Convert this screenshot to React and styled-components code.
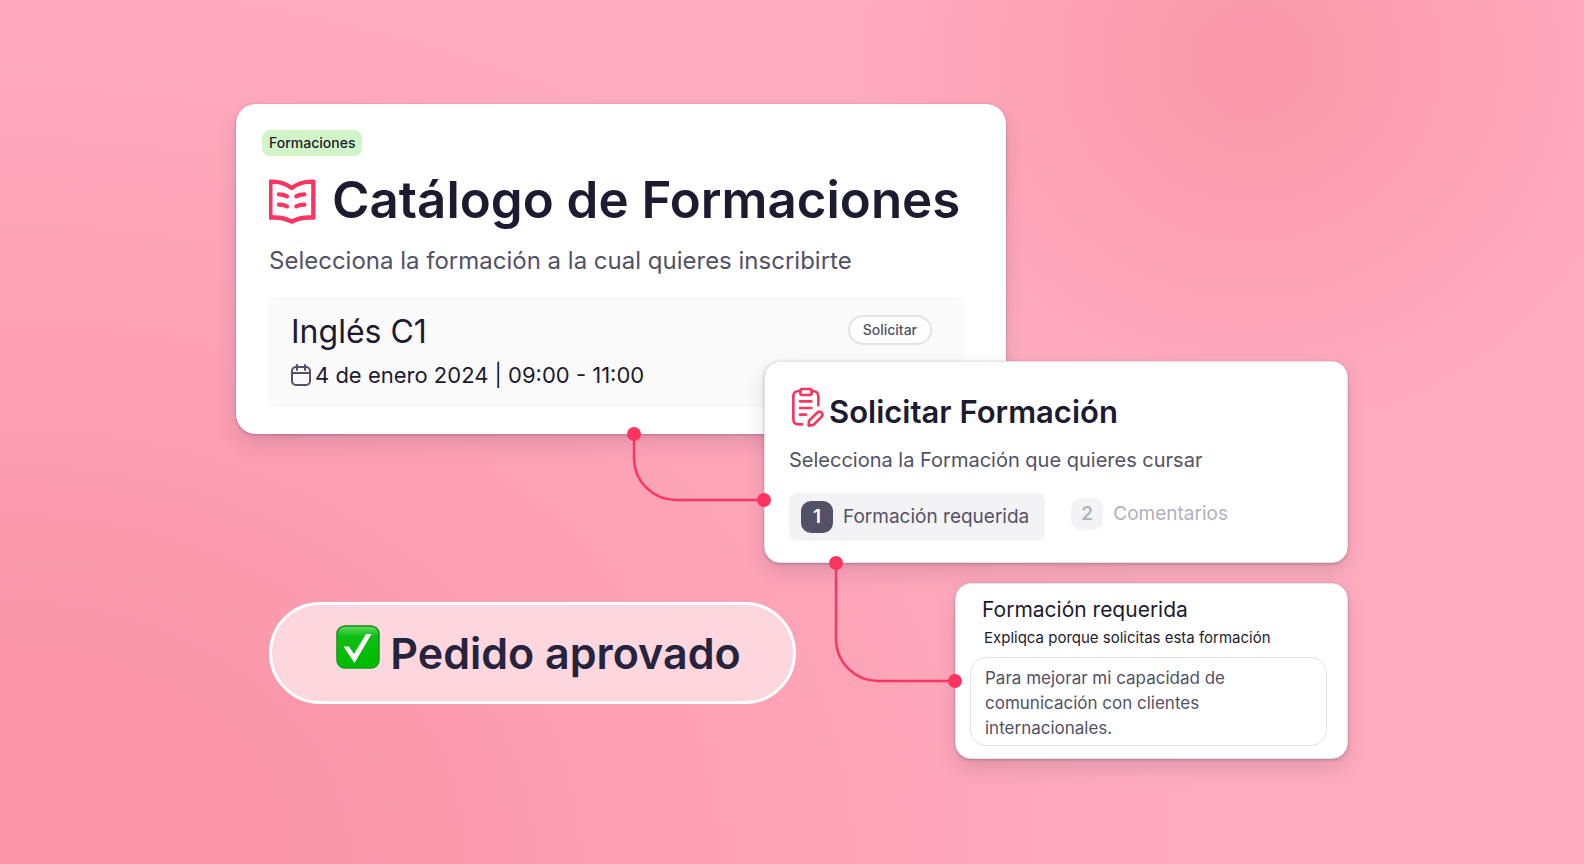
import styled, { createGlobalStyle, css } from 'styled-components';

const GlobalStyle = createGlobalStyle`
  *,
  *::before,
  *::after {
    box-sizing: border-box;
    margin: 0;
    padding: 0;
  }

  :root {
    --color-brand: #fb3560;
    --color-ink: #1d1b30;
    --color-grey-600: #535165;
    --color-grey-400: #b1b1b9;
    --color-grey-200: #e4e4e8;
    --color-grey-100: #f3f3f5;
    --color-grey-50: #fafafa;
    --shadow-card: 0 1px 3px rgba(60, 40, 70, 0.3), 0 10px 20px rgba(60, 40, 70, 0.14);
  }

  body {
    font-family: Inter, 'Liberation Sans', sans-serif;
    color: var(--color-ink);
  }

  button,
  textarea {
    font: inherit;
    color: inherit;
  }
`;

const Page = styled.main`
  min-height: 100vh;
  display: grid;
  place-items: center;
  padding: 24px 24px 26px;
  background:
    radial-gradient(
      ellipse 400px 380px at 79% 7%,
      rgba(250, 148, 168, 0.8),
      rgba(250, 148, 168, 0.6) 35%,
      rgba(250, 148, 168, 0)
    ),
    radial-gradient(ellipse 1200px 900px at 0 100%, #fb95aa 20%, rgba(251, 149, 170, 0) 100%),
    #ffacbf;
`;

const Board = styled.div`
  width: 100%;
  max-width: 1112px;
  display: grid;
  grid-template-columns: 33fr 495fr 32fr 159fr 51fr 342fr;
  grid-template-rows:
    257px 73px minmax(129px, auto) 20px 19px minmax(102px, auto)
    minmax(55px, auto);
`;

const Card = styled.section`
  position: relative;
  background-color: #fff;
  border-radius: 16px;
  box-shadow: var(--shadow-card);
`;

const CatalogCard = styled(Card)`
  grid-column: 1 / 6;
  grid-row: 1 / 3;
  padding: 26px 42px 26px 33px;
  border-radius: 20px;
`;

const RequestCard = styled(Card)`
  grid-column: 3 / 7;
  grid-row: 2 / 4;
  padding: 24px 24px 21px;
  border: 1px solid var(--color-grey-200);
`;

const ReasonCard = styled(Card)`
  grid-column: 5 / 7;
  grid-row: 5 / 8;
  padding: 12px 20px 12px 14px;
  border: 1px solid var(--color-grey-200);
`;

const Badge = styled.span`
  display: block;
  width: fit-content;
  margin-left: -7px;
  padding: 0 7px;
  border-radius: 8px;
  background-color: #d2f5c8;
  font-size: 14px;
  font-weight: 500;
  line-height: 26px;
`;

const Title = styled.h1`
  display: flex;
  align-items: center;
  gap: 16px;
  margin-top: 12px;
  font-size: 51px;
  font-weight: 600;
  line-height: 64px;
  white-space: nowrap;
`;

const Subtitle = styled.p`
  color: var(--color-grey-600);
  font-size: 24px;
  line-height: 32px;
  margin-top: 13px;
`;

const Course = styled.article`
  display: flex;
  justify-content: space-between;
  align-items: flex-start;
  margin-top: 20px;
  padding: 16px 32px 16px 22px;
  border-radius: 8px;
  background-color: var(--color-grey-50);
`;

const CourseName = styled.h2`
  font-size: 32px;
  font-weight: 400;
  line-height: 38px;
`;

const CourseDate = styled.p`
  display: flex;
  align-items: center;
  gap: 4px;
  margin-top: 8px;
  font-size: 22px;
  line-height: 32px;
`;

const ApplyButton = styled.button`
  padding: 0 13px;
  border: 2px solid var(--color-grey-200);
  border-radius: 16px;
  background-color: #fff;
  color: var(--color-grey-600);
  font-size: 14px;
  font-weight: 500;
  line-height: 26px;
  margin-top: 2px;
`;

const RequestTitle = styled.h2`
  display: flex;
  align-items: flex-start;
  gap: 4px;
  font-size: 31px;
  font-weight: 600;
  line-height: 52px;
`;

const RequestText = styled.p`
  margin-top: 6px;
  color: var(--color-grey-600);
  font-size: 20px;
  line-height: 32px;
`;

const Steps = styled.ol`
  display: flex;
  align-items: flex-start;
  gap: 14px;
  margin-top: 17px;
  list-style: none;
`;

const StepButton = styled.button`
  display: flex;
  align-items: center;
  gap: 10px;
  padding: 5px 12px;
  border: 0;
  border-radius: 8px;
  background: none;
  color: var(--color-grey-400);
  font-size: 19px;
  line-height: 32px;

  ${(props) =>
    props.$active &&
    css`
      padding: 8px 16px 8px 12px;
      background-color: var(--color-grey-100);
      color: var(--color-grey-600);
    `}
`;

const StepNumber = styled.span`
  width: 32px;
  height: 32px;
  border-radius: 10px;
  background-color: ${(props) => (props.$active ? 'var(--color-grey-600)' : 'var(--color-grey-100)')};
  color: ${(props) => (props.$active ? '#fff' : 'var(--color-grey-400)')};
  font-weight: 600;
  text-align: center;
`;

const ReasonTitle = styled.h3`
  padding-left: 12px;
  font-size: 21px;
  font-weight: 400;
  line-height: 28px;
`;

const ReasonLabel = styled.label`
  display: block;
  padding: 0 14px;
  font-size: 15px;
  line-height: 28px;
`;

const ReasonInput = styled.textarea`
  display: block;
  width: 100%;
  height: 89px;
  margin-top: 5px;
  padding: 8px 14px;
  border: 1px solid var(--color-grey-200);
  border-radius: 16px;
  background-color: #fff;
  color: var(--color-grey-600);
  font-size: 17px;
  line-height: 25px;
  resize: none;
  overflow: hidden;
`;

const Approved = styled.p`
  grid-column: 2 / 4;
  grid-row: 6 / 7;
  display: flex;
  align-items: baseline;
  justify-content: center;
  gap: 10px;
  padding-left: 12px;
  border: 3px solid #fff;
  border-radius: 51px;
  background-color: #fdd6de;
  color: #25233d;
  font-size: 43px;
  font-weight: 600;
  line-height: 96px;
`;

/* Lines between cards, anchored to the left edge of the card they lead to */
const Connector = styled.svg`
  position: absolute;
  right: calc(100% + 1px);
  overflow: visible;
  fill: none;
  stroke: var(--color-brand);
  stroke-width: 2.5;
  z-index: 1;

  circle {
    fill: var(--color-brand);
    stroke: none;
  }
`;

const RequestConnector = styled(Connector)`
  top: 72px;
`;

const ReasonConnector = styled(Connector)`
  top: -21px;
`;

const Icon = styled.svg`
  flex: none;
  fill: none;
  stroke: ${(props) => props.$color || 'var(--color-brand)'};
  stroke-linecap: round;
  stroke-linejoin: round;
`;

function BookIcon() {
  return (
    <Icon width="47" height="48" viewBox="6 -4 141 144" strokeWidth="13" aria-hidden="true">
      <path d="M10 13Q46 11 74 32Q102 11 139 13V121Q102 118 74 133Q46 118 10 121Z" />
      <path d="M36 51Q50 51 60 57M88 57Q98 51 112 51M36 82Q50 82 60 87M88 87Q98 82 112 82" />
    </Icon>
  );
}

function ClipboardIcon() {
  return (
    <Icon width="36" height="42" viewBox="-2 -2 108 126" strokeWidth="8" aria-hidden="true">
      <rect x="32" y="7" width="34" height="18" rx="5" />
      <path d="M32 13H28Q11 13 11 30V96Q11 113 28 113H37M66 13H69Q86 13 86 30V56" />
      <path d="M31 44H65M31 64H65M31 84H49" />
      <path d="M57 117L58 102L84 77Q90 72 96 78Q101 84 96 90L71 115Z" />
    </Icon>
  );
}

function CalendarIcon() {
  return (
    <Icon
      width="20"
      height="24"
      viewBox="0 0 20 24"
      strokeWidth="2"
      $color="var(--color-grey-600)"
      aria-hidden="true"
    >
      <rect x="1" y="4" width="18" height="18" rx="4" />
      <path d="M1 10H19M6 2V7M14 2V7" />
    </Icon>
  );
}

function CheckIcon() {
  return (
    <svg width="44" height="44" viewBox="0 0 44 44" aria-hidden="true">
      <defs>
        <linearGradient id="check-fill" x1="0" y1="0" x2="0" y2="1">
          <stop offset="0" stopColor="#5fdc62" />
          <stop offset="0.25" stopColor="#0fbd12" />
          <stop offset="1" stopColor="#00ba00" />
        </linearGradient>
        <linearGradient id="check-edge" x1="0" y1="0" x2="0" y2="1">
          <stop offset="0" stopColor="#128a1e" />
          <stop offset="1" stopColor="#08a50c" />
        </linearGradient>
      </defs>
      <rect
        x="1"
        y="1"
        width="42"
        height="42"
        rx="8"
        fill="url(#check-fill)"
        stroke="url(#check-edge)"
        strokeWidth="1.5"
      />
      <path d="M7.5 21.5H13L18 29L30 9H35.5L18.5 38Z" fill="#fff" />
    </svg>
  );
}

const steps = [
  { id: 1, label: 'Formación requerida' },
  { id: 2, label: 'Comentarios' },
];

function App() {
  const activeStep = 1;

  return (
    <>
      <GlobalStyle />
      <Page>
        <Board>
          <CatalogCard>
            <Badge>Formaciones</Badge>
            <Title>
              <BookIcon />
              Catálogo de Formaciones
            </Title>
            <Subtitle>Selecciona la formación a la cual quieres inscribirte</Subtitle>
            <Course>
              <div>
                <CourseName>Inglés C1</CourseName>
                <CourseDate>
                  <CalendarIcon />4 de enero 2024 | 09:00 - 11:00
                </CourseDate>
              </div>
              <ApplyButton type="button">Solicitar</ApplyButton>
            </Course>
          </CatalogCard>

          <RequestCard>
            <RequestConnector width="130" height="66" aria-hidden="true">
              <path d="M0 0V24A42 42 0 0 0 42 66H130" />
              <circle cx="0" cy="0" r="7" />
              <circle cx="130" cy="66" r="7" />
            </RequestConnector>
            <RequestTitle>
              <ClipboardIcon />
              Solicitar Formación
            </RequestTitle>
            <RequestText>Selecciona la Formación que quieres cursar</RequestText>
            <Steps>
              {steps.map((step) => (
                <li key={step.id}>
                  <StepButton type="button" $active={step.id === activeStep}>
                    <StepNumber $active={step.id === activeStep}>{step.id}</StepNumber>
                    {step.label}
                  </StepButton>
                </li>
              ))}
            </Steps>
          </RequestCard>

          <ReasonCard>
            <ReasonConnector width="119" height="118" aria-hidden="true">
              <path d="M0 0V76A42 42 0 0 0 42 118H119" />
              <circle cx="0" cy="0" r="7" />
              <circle cx="119" cy="118" r="7" />
            </ReasonConnector>
            <ReasonTitle>Formación requerida</ReasonTitle>
            <ReasonLabel htmlFor="reason">Expliqca porque solicitas esta formación</ReasonLabel>
            <ReasonInput
              id="reason"
              defaultValue="Para mejorar mi capacidad de comunicación con clientes internacionales."
            />
          </ReasonCard>

          <Approved>
            <CheckIcon />
            Pedido aprovado
          </Approved>
        </Board>
      </Page>
    </>
  );
}

export default App;
